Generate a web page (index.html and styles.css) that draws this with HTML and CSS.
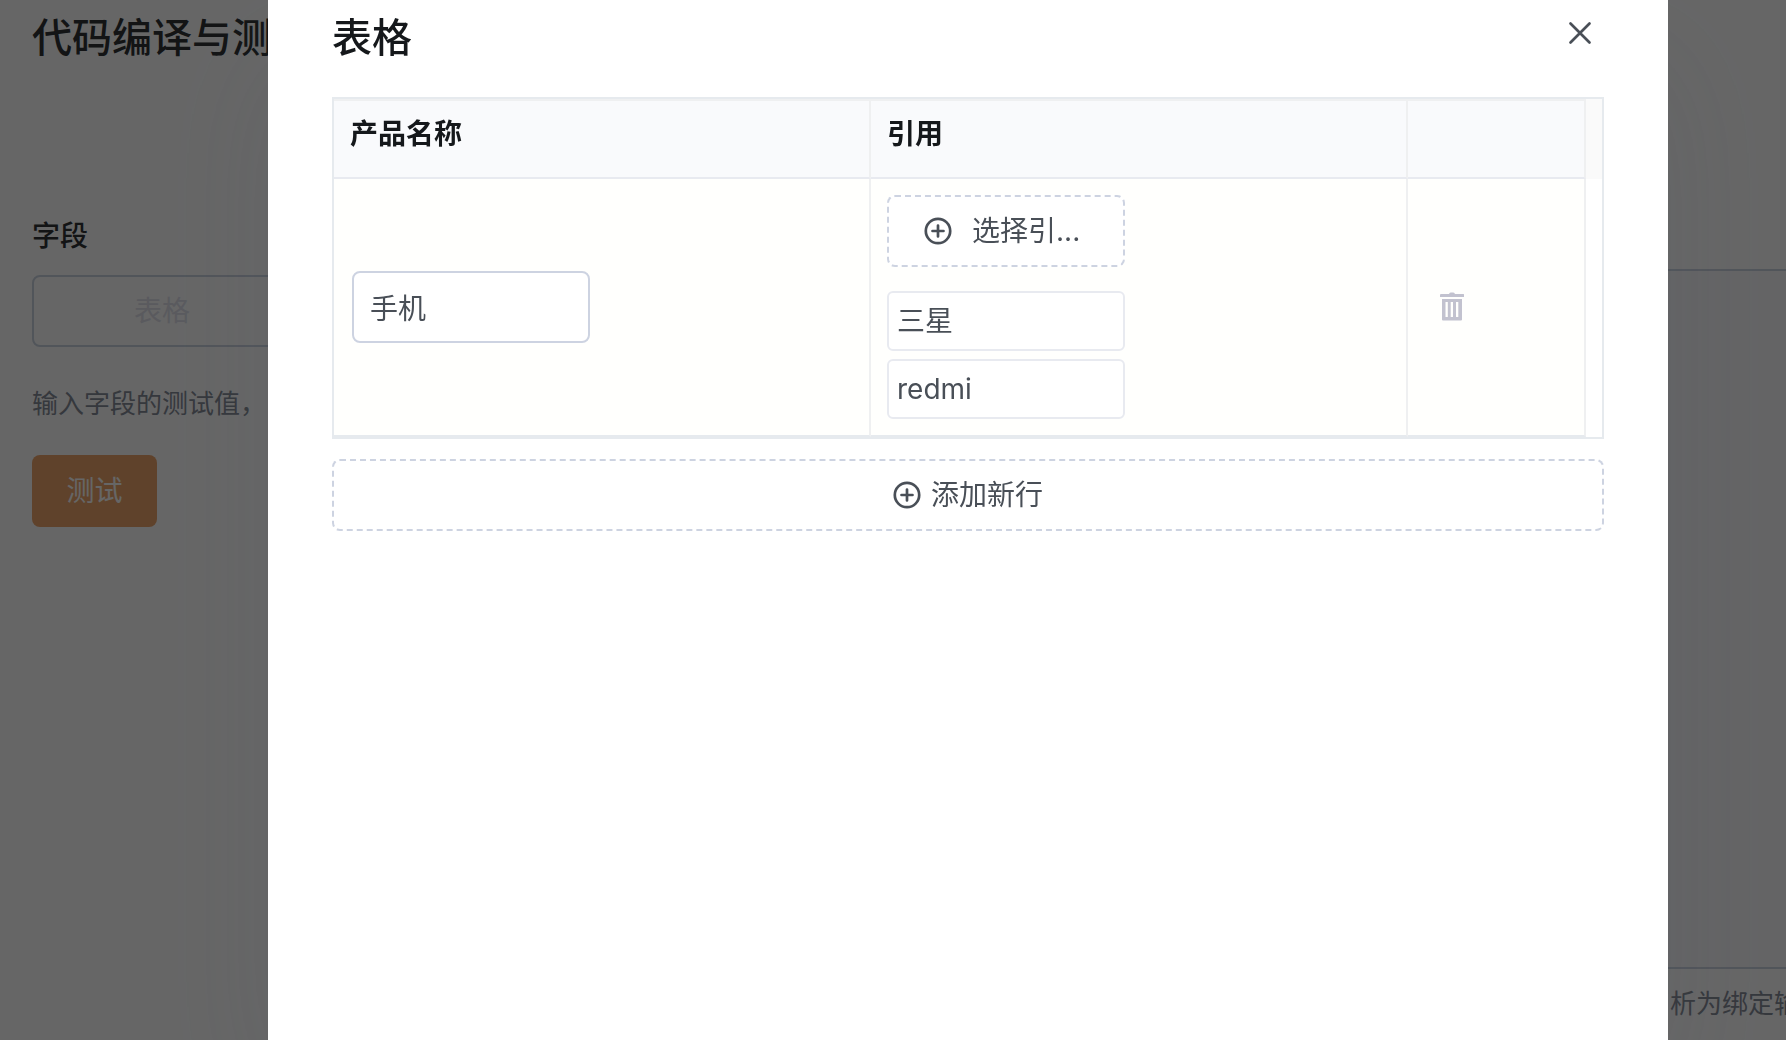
FILE: index.html
```
<!DOCTYPE html>
<html lang="zh-CN">
<head>
    <meta charset="UTF-8">
    <meta name="viewport" content="width=device-width, initial-scale=1.0">
    <title>代码编译与测试</title>
    <link rel="stylesheet" href="styles.css">
</head>
<body>
    <div class="page">
        <div class="test-panel">
            <h1>代码编译与测试</h1>
            <h2>字段</h2>
            <button type="button" class="field-btn">表格</button>
            <p class="hint">输入字段的测试值，</p>
            <button type="button" class="test-btn">测试</button>
        </div>
        <div class="code-panel">
            <div class="editor"></div>
            <p class="hint">析为绑定输</p>
        </div>
    </div>

    <div class="overlay">
        <div class="modal" role="dialog" aria-labelledby="modalTitle">
            <div class="modal-header">
                <h2 id="modalTitle">表格</h2>
                <button type="button" class="close-btn" aria-label="关闭">
                    <svg width="24" height="24" viewBox="0 0 24 24" fill="none" stroke="currentColor" stroke-width="2.7" stroke-linecap="round">
                        <path d="M2.5 2.5l19 19M21.5 2.5l-19 19"/>
                    </svg>
                </button>
            </div>

            <div class="table-wrap">
                <table>
                    <colgroup>
                        <col>
                        <col>
                        <col class="col-action">
                        <col class="col-gutter">
                    </colgroup>
                    <thead>
                        <tr>
                            <th>产品名称</th>
                            <th>引用</th>
                            <th></th>
                            <th class="gutter"></th>
                        </tr>
                    </thead>
                    <tbody>
                        <tr>
                            <td>
                                <input type="text" class="name-input" value="手机" aria-label="产品名称">
                            </td>
                            <td>
                                <button type="button" class="dashed-btn select-btn">
                                    <svg class="icon-plus" viewBox="0 0 28 28" fill="none" stroke="currentColor" stroke-width="2.7" stroke-linecap="round">
                                        <circle cx="14" cy="14" r="12.2"/>
                                        <path d="M14 8.5v11M8.5 14h11"/>
                                    </svg>
                                    <span>选择引...</span>
                                </button>
                                <ul class="ref-list">
                                    <li>三星</li>
                                    <li>redmi</li>
                                </ul>
                            </td>
                            <td class="action">
                                <button type="button" class="delete-btn" aria-label="删除">
                                    <svg width="24" height="30" viewBox="0 0 24 30" fill="currentColor">
                                        <path d="M9 2Q9.700 0.600 11 0.600h2Q14.300 0.600 15 2h8.300a1 1 0 0 1 1 1v2H0V3a1 1 0 0 1 1-1z"/>
                                        <path fill-rule="evenodd" d="M2 7h20v20.500a1 1 0 0 1-1 1H3a1 1 0 0 1-1-1zM5.500 10v15h2.300V10zM10.700 10v15h2.300V10zM16 10v15h2.300V10z"/>
                                    </svg>
                                </button>
                            </td>
                            <td class="gutter"></td>
                        </tr>
                    </tbody>
                </table>
            </div>

            <button type="button" class="dashed-btn add-btn">
                <svg class="icon-plus" viewBox="0 0 28 28" fill="none" stroke="currentColor" stroke-width="2.7" stroke-linecap="round">
                    <circle cx="14" cy="14" r="12.2"/>
                    <path d="M14 8.5v11M8.5 14h11"/>
                </svg>
                <span>添加新行</span>
            </button>
        </div>
    </div>
</body>
</html>
```

FILE: styles.css
```
* {
    box-sizing: border-box;
}

body {
    margin: 0;
    overflow: hidden;
    font-family: Inter, "Noto Sans CJK SC", sans-serif;
    font-size: 28px;
    line-height: 32px;
    color: #494f57;
    background-color: #ffffff;
}

h1, h2, p, ul {
    margin: 0;
    padding: 0;
}

button, input {
    margin: 0;
    font: inherit;
    color: inherit;
}

button {
    display: flex;
    align-items: center;
    justify-content: center;
    cursor: pointer;
}

/* page behind the dialog */
.page {
    display: grid;
    grid-template-columns: 1fr 118px;
    min-height: 100vh;
}

.test-panel {
    display: flex;
    flex-direction: column;
    align-items: flex-start;
    padding: 14px 32px;
}

h1 {
    font-size: 40px;
    font-weight: 500;
    line-height: 48px;
    color: #303336;
}

.test-panel h2 {
    margin-top: 158px;
    font-size: 28px;
    font-weight: 500;
    color: #303336;
}

.field-btn {
    width: 260px;
    height: 72px;
    margin-top: 23px;
    border: 2px solid #cbd4e1;
    border-radius: 8px;
    background: none;
    color: #e0e2ec;
}

.hint {
    font-size: 26px;
    color: #868c98;
    white-space: nowrap;
}

.test-panel .hint {
    margin-top: 41px;
}

.test-btn {
    width: 125px;
    height: 72px;
    margin-top: 35px;
    border: none;
    border-radius: 8px;
    background-color: #eea56b;
    color: #ffffff;
}

.code-panel {
    display: flex;
    flex-direction: column;
    padding-top: 269px;
    overflow: hidden;
}

.editor {
    flex: 1;
    border-top: 2px solid #cbd4e1;
    border-bottom: 2px solid #cbd4e1;
    background-color: #f9fafc;
}

.code-panel .hint {
    padding: 19px 0 20px 2px;
}

/* dialog */
.overlay {
    position: fixed;
    inset: 0;
    display: flex;
    padding: 0 118px 0 268px;
    background-color: rgba(0, 0, 0, 0.6);
}

.modal {
    flex: 1;
    padding: 14px 64px;
    background-color: #ffffff;
    box-shadow: 0 60px 120px rgba(85, 88, 105, 0.12);
}

.modal-header {
    display: flex;
    justify-content: space-between;
    align-items: flex-start;
    margin-bottom: 35px;
}

.modal-header h2 {
    font-size: 40px;
    font-weight: 500;
    line-height: 48px;
    color: #15181b;
}

.close-btn {
    padding: 7px 12px;
    border: none;
    background: none;
}

.table-wrap {
    border: 2px solid #e6eaee;
}

table {
    width: 100%;
    table-layout: fixed;
    border-collapse: separate;
    border-spacing: 0;
}

.col-action {
    width: 178px;
}

.col-gutter {
    width: 16px;
}

th {
    padding: 17px 16px 27px;
    border-top: 2px solid #eff0f1;
    border-right: 2px solid #eff0f1;
    border-bottom: 2px solid #e8eaf0;
    background-color: #f9fafc;
    font-weight: 600;
    text-align: left;
    color: #15181b;
}

td {
    padding: 16px;
    border-right: 2px solid #eff0f1;
    border-bottom: 2px solid #e6eaee;
    background-color: #fffffd;
    vertical-align: middle;
}

th.gutter {
    padding: 0;
    border: none;
    background-color: #fafafa;
}

td.gutter {
    padding: 0;
    border: none;
    background-color: #ffffff;
}

.name-input {
    display: block;
    width: 238px;
    height: 72px;
    margin-left: 2px;
    padding: 0 16px;
    border: 2px solid #cdd3e1;
    border-radius: 8px;
    background-color: #ffffff;
}

.dashed-btn {
    height: 72px;
    border: 2px dashed #cdd3e1;
    border-radius: 8px;
    background-color: #ffffff;
}

.icon-plus {
    width: 28px;
    height: 28px;
}

.select-btn {
    justify-content: flex-start;
    gap: 20px;
    width: 238px;
    padding: 0 35px;
    white-space: nowrap;
}

.ref-list {
    display: flex;
    flex-direction: column;
    gap: 8px;
    margin-top: 24px;
    list-style: none;
}

.ref-list li {
    width: 238px;
    padding: 12px 8px;
    border: 2px solid #e8eaf0;
    border-radius: 6px;
    background-color: #ffffff;
}

td.action {
    padding-left: 32px;
}

.delete-btn {
    padding: 0;
    border: none;
    background: none;
    color: #c2c2cf;
}

.add-btn {
    gap: 10px;
    width: 100%;
    margin-top: 20px;
}
```
